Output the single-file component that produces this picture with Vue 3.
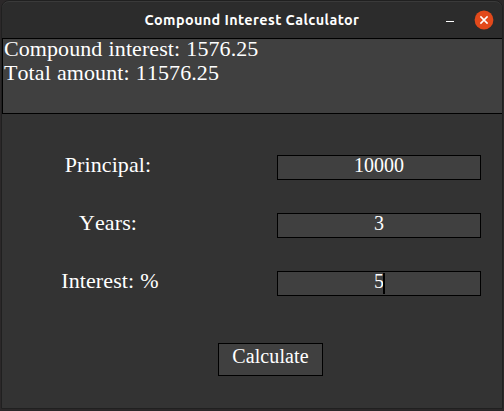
<script setup>
import { ref } from 'vue'

const results = ref(['Compound interest: 1576.25', 'Total amount: 11576.25'])
const fields = ref([
  { id: 'principal', label: 'Principal:', value: '10000', focused: false },
  { id: 'years', label: 'Years:', value: '3', focused: false },
  { id: 'interest', label: 'Interest: %', value: '5', focused: true },
])
</script>

<template>
  <div class="desktop">
    <main class="window">
      <header class="titlebar">
        <h1 class="title">Compound Interest Calculator</h1>
        <div class="controls">
          <span class="minimize"></span>
          <svg class="close" viewBox="0 0 20 20" width="20" height="20">
            <circle cx="10" cy="10" r="9.4" fill="#e2491b" />
            <path d="M6.4 6.4 L13.6 13.6 M13.6 6.4 L6.4 13.6" stroke="#fff" stroke-width="1.5" />
          </svg>
        </div>
      </header>
      <section class="output">
        <div v-for="line in results" :key="line">{{ line }}</div>
      </section>
      <section class="form">
        <div v-for="field in fields" :key="field.id" class="row">
          <span class="label" :class="field.id">{{ field.label }}</span>
          <div class="entry">
            <span class="value">{{ field.value }}<i v-if="field.focused" class="caret"></i></span>
          </div>
        </div>
      </section>
      <button class="calculate" type="button">Calculate</button>
    </main>
  </div>
</template>

<style>
body {
  margin: 0;
  background: #2b2829;
}
</style>

<style scoped>
.desktop {
  box-sizing: border-box;
  width: 504px;
  height: 411px;
  padding: 0 1px 2px;
  overflow: hidden;
  background: #2b2829;
}
.window {
  box-sizing: border-box;
  display: flex;
  flex-direction: column;
  height: 409px;
  border: 1px solid #202020;
  border-radius: 8px 8px 0 0;
  overflow: hidden;
  background: #333;
  color: #fff;
  font-family: "Liberation Serif", serif;
  font-kerning: none;
}
.titlebar {
  box-sizing: border-box;
  display: grid;
  grid-template-columns: 1fr auto 1fr;
  align-items: center;
  flex: none;
  height: 37px;
  border-top: 1px solid #3a3a3a;
  border-radius: 7px 7px 0 0;
  background: #2c2c2c;
}
.title {
  grid-column: 2;
  margin: 0;
  font: 700 14.4px/20px Ubuntu, "Noto Sans", sans-serif;
  letter-spacing: 0.4px;
  white-space: nowrap;
}
.controls {
  display: flex;
  justify-content: flex-end;
  align-items: center;
  gap: 20px;
  padding-right: 8px;
}
.minimize {
  width: 8px;
  height: 1px;
  margin-top: 3px;
  background: #fff;
}
.close {
  display: block;
}
.output {
  box-sizing: border-box;
  flex: none;
  height: 76px;
  padding-left: 1px;
  border: solid #000;
  border-width: 1px 0 1px 1px;
  background: #404040;
  font-size: 22px;
  letter-spacing: 0.08px;
  word-spacing: 0.6px;
  line-height: 24px;
  white-space: nowrap;
}
.output > div:first-child {
  margin-top: -2px;
}
.form {
  display: flex;
  flex-direction: column;
  gap: 33px;
  padding: 41px 21px 0 0;
}
.row {
  display: flex;
  justify-content: space-between;
  align-items: center;
  height: 25px;
}
.label {
  width: 212px;
  text-align: center;
  font-size: 22px;
  letter-spacing: 0.1px;
  word-spacing: 0.5px;
  line-height: 24px;
  padding-bottom: 6px;
}
.interest {
  width: 216px;
}
.entry {
  box-sizing: border-box;
  width: 204px;
  height: 25px;
  border: 1px solid #000;
  background: #404040;
  text-align: center;
  font-size: 20px;
  line-height: 18px;
}
.value {
  position: relative;
}
.caret {
  position: absolute;
  right: -1px;
  top: 3px;
  width: 2px;
  height: 21px;
  background: #000;
}
.calculate {
  box-sizing: border-box;
  align-self: center;
  width: 105px;
  height: 33px;
  margin: 47px 0 0 37px;
  padding: 0 0 8px;
  border: 1px solid #000;
  border-radius: 0;
  background: #404040;
  color: #fff;
  font: 20px/24px "Liberation Serif", serif;
  letter-spacing: 0.1px;
}
</style>
